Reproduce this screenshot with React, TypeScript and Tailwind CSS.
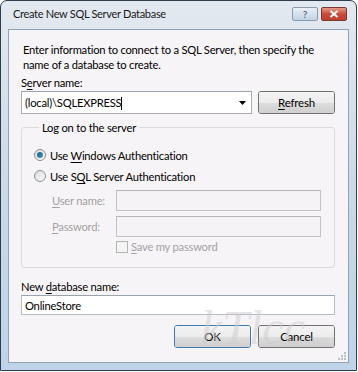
import type { JSX, ReactNode } from 'react';

const ui = { fontFamily: 'Lato, "Noto Sans", sans-serif' };

function Acc({ children }: { children: ReactNode }) {
  return <span className="underline underline-offset-2 decoration-1">{children}</span>;
}

function VistaButton({ children, primary = false }: { children: ReactNode; primary?: boolean }) {
  return (
    <button
      className={
        'relative h-[23px] w-[77px] rounded-[3px] border text-[11.5px] text-black overflow-hidden ' +
        (primary
          ? 'border-[#3d7bad] shadow-[inset_0_0_0_1px_#c9ecfb]'
          : 'border-[#707070] shadow-[inset_0_0_0_1px_#fbfbfb]')
      }
    >
      <span className="absolute inset-x-0 top-0 h-1/2 bg-gradient-to-b from-[#f4f4f4] to-[#ebebeb]" />
      <span className="absolute inset-x-0 bottom-0 h-1/2 bg-gradient-to-b from-[#dedede] to-[#cfcfcf]" />
      <span className="relative">{children}</span>
    </button>
  );
}

function Radio({ checked, children }: { checked?: boolean; children: ReactNode }) {
  return (
    <div className="flex items-center h-[16px] gap-[4px]">
      <span className="w-[12px] h-[12px] rounded-full border border-[#8e8f8f] bg-gradient-to-br from-[#dcdcdc] to-[#fafafa] flex items-center justify-center">
        {checked && (
          <span className="w-[6px] h-[6px] rounded-full bg-gradient-to-br from-[#1e5b7a] to-[#3aa0c8]" />
        )}
      </span>
      <span>{children}</span>
    </div>
  );
}

function TextBox({ value, disabled = false }: { value?: string; disabled?: boolean }) {
  return (
    <div
      className={
        'h-full flex items-center px-[3px] border ' +
        (disabled
          ? 'border-[#c3c3c3] bg-[#f6f3f6] border-t-[#b6b6b6]'
          : 'border-[#b6bcc6] border-t-[#9ba3ae] bg-white')
      }
    >
      {value}
    </div>
  );
}

export default function App(): JSX.Element {
  return (
    <div className="w-[358px] h-[372px] bg-white" style={ui}>
      <div className="w-[357px] h-[371px] rounded-t-[7px] border border-[#2f3c4a] bg-gradient-to-b from-[#e3e9f0] via-[#cbd9e8] to-[#bfd3e9] flex flex-col px-[7px] pb-[7px] text-[11.2px] tracking-[-0.22px] text-black">
        {/* title bar */}
        <div className="h-[28px] flex items-center justify-between pl-[5px] pr-[2px] shrink-0">
          <span className="text-[11px] tracking-[-0.3px] text-[#1a1a1a] -mt-[2px]">Create New SQL Server Database</span>
          <div className="flex items-center gap-[3px] -mt-[3px]">
            <div className="w-[26px] h-[14px] rounded-[2px] border border-[#8a9bb0] bg-gradient-to-b from-[#e9eff6] to-[#c2d2e4] flex items-center justify-center text-[10px] font-bold text-[#5a6f88] leading-none tracking-normal">
              ?
            </div>
            <div className="w-[26px] h-[14px] rounded-[2px] border border-[#7a3a32] bg-gradient-to-b from-[#e59a8a] via-[#c9483a] to-[#c0402f] flex items-center justify-center">
              <svg width="10" height="8" viewBox="0 0 10 8">
                <path d="M1.5 1 L8.5 7 M8.5 1 L1.5 7" stroke="white" strokeWidth="2" />
              </svg>
            </div>
          </div>
        </div>

        {/* client area */}
        <div className="relative flex-1 border border-[#8fa2b6] bg-[#f7f4f7] px-[12px] pt-[12px] leading-[15px]">
          <p className="pl-[2px] whitespace-nowrap">
            Enter information to connect to a SQL Server, then specify the
            <br />
            name of a database to create.
          </p>

          <div className="mt-[3px]">
            S<Acc>e</Acc>rver name:
          </div>
          <div className="mt-[1px] flex gap-[6px] items-start">
            <div className="w-[231px] h-[23px] border border-[#abadb3] border-t-[#9ba3ae] bg-white flex items-center pl-[3px] pr-[5px]">
              <span className="flex-1">
                (local)\SQLEXPRESS<span className="inline-block w-px h-[13px] bg-black align-middle -mt-[2px]" />
              </span>
              <svg width="7" height="4" viewBox="0 0 7 4">
                <path d="M0 0 H7 L3.5 4 Z" fill="#000" />
              </svg>
            </div>
            <VistaButton>
              <Acc>R</Acc>efresh
            </VistaButton>
          </div>

          <fieldset className="mt-[6px] w-[314px] h-[148px] rounded-[3px] border border-[#ddd9dd] pl-[12px] pr-[12px]">
            <legend className="ml-[5px] px-[3px]">Log on to the server</legend>
            <div className="mt-[12px] flex flex-col gap-[5px]">
              <Radio checked>
                Use <Acc>W</Acc>indows Authentication
              </Radio>
              <Radio>
                Use S<Acc>Q</Acc>L Server Authentication
              </Radio>
            </div>
            <div className="mt-[6px] pl-[18px] text-[#a3a1a3] grid grid-cols-[64px_205px] gap-y-[5px] items-center whitespace-nowrap">
              <span>
                <Acc>U</Acc>ser name:
              </span>
              <div className="h-[21px]">
                <TextBox disabled />
              </div>
              <span>
                <Acc>P</Acc>assword:
              </span>
              <div className="h-[21px]">
                <TextBox disabled />
              </div>
              <span />
              <div className="flex items-center gap-[3px] -mt-[3px]">
                <span className="w-[12px] h-[12px] border border-[#b4b4b4] bg-[#f4f4f4]" />
                <span>
                  <Acc>S</Acc>ave my password
                </span>
              </div>
            </div>
          </fieldset>

          <div className="mt-[11px]">
            New <Acc>d</Acc>atabase name:
          </div>
          <div className="mt-[1px] w-[314px] h-[20px]">
            <TextBox value="OnlineStore" />
          </div>

          <div className="mt-[10px] w-[314px] flex justify-end gap-[7px]">
            <VistaButton primary>OK</VistaButton>
            <VistaButton>Cancel</VistaButton>
          </div>

          {/* watermark */}
          <div
            className="pointer-events-none absolute left-[192px] top-[274px] text-[48px] italic text-[#cfcbcf] opacity-50 leading-none tracking-normal"
            style={{ fontFamily: '"Liberation Serif", serif' }}
          >
            kTlcc<span className="text-[11px] not-italic" style={ui}>.com</span>
          </div>

          {/* size grip */}
          <svg className="absolute right-[2px] bottom-[2px]" width="8" height="8" viewBox="0 0 8 8">
            <g fill="#b9c0c8">
              <rect x="6" y="0" width="2" height="2" />
              <rect x="3" y="3" width="2" height="2" />
              <rect x="6" y="3" width="2" height="2" />
              <rect x="0" y="6" width="2" height="2" />
              <rect x="3" y="6" width="2" height="2" />
              <rect x="6" y="6" width="2" height="2" />
            </g>
          </svg>
        </div>
      </div>
    </div>
  );
}
